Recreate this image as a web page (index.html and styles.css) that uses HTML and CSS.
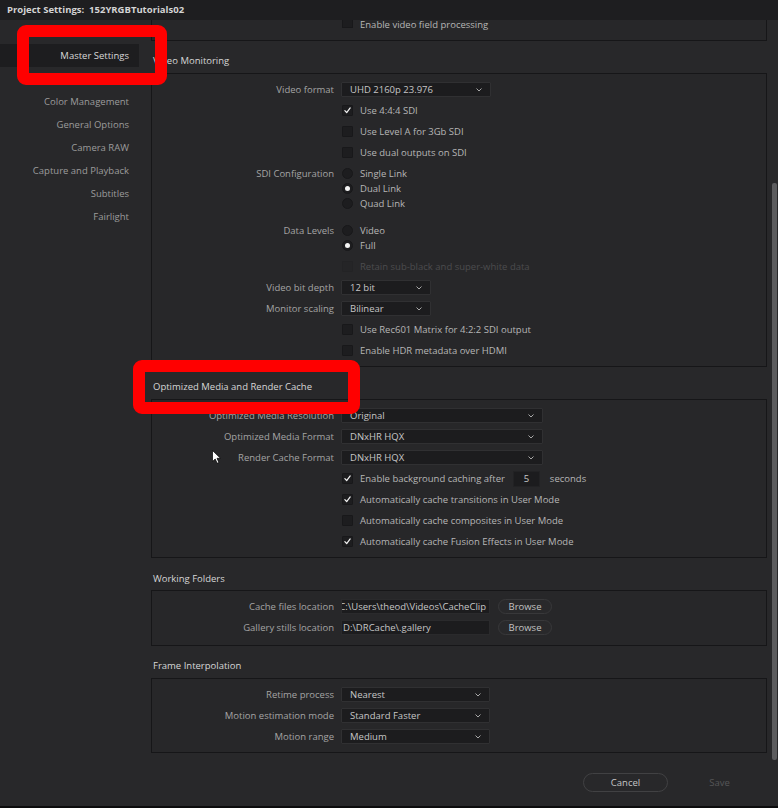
FILE: index.html
```html
<!DOCTYPE html>
<html>
<head>
<meta charset="utf-8">
<link rel="stylesheet" href="styles.css">
</head>
<body>
<div class="window">
  <div class="titlebar">Project Settings:&nbsp; 152YRGBTutorials02</div>
  <div class="main">
    <nav class="sidebar">
      <div class="nav-item active">Master Settings</div>
      <div class="nav-item gap">Color Management</div>
      <div class="nav-item">General Options</div>
      <div class="nav-item">Camera RAW</div>
      <div class="nav-item">Capture and Playback</div>
      <div class="nav-item">Subtitles</div>
      <div class="nav-item">Fairlight</div>
    </nav>
    <div class="content">
      <div class="panel partial">
        <div class="row cutrow"><span class="lbl"></span><span class="cb cut"></span><span class="cbl tight">Enable video field processing</span></div>
      </div>

      <div class="section-title">Video Monitoring</div>
      <div class="panel">
        <div class="row"><span class="lbl">Video format</span><span class="dd w150"><span class="ddv">UHD 2160p 23.976</span><svg class="chev" viewBox="0 0 6 4"><path d="M0.5 0.5 L3 3 L5.5 0.5"/></svg></span></div>
        <div class="row"><span class="lbl"></span><span class="cb on"><svg viewBox="0 0 11 11"><path d="M2.3 5.6 L4.5 8 L8.8 2.4"/></svg></span><span class="cbl">Use 4:4:4 SDI</span></div>
        <div class="row"><span class="lbl"></span><span class="cb"></span><span class="cbl">Use Level A for 3Gb SDI</span></div>
        <div class="row"><span class="lbl"></span><span class="cb"></span><span class="cbl">Use dual outputs on SDI</span></div>
        <div class="radio-group">
          <div class="rrow"><span class="lbl">SDI Configuration</span><span class="rb"></span><span class="cbl">Single Link</span></div>
          <div class="rrow"><span class="lbl"></span><span class="rb on"></span><span class="cbl">Dual Link</span></div>
          <div class="rrow"><span class="lbl"></span><span class="rb"></span><span class="cbl">Quad Link</span></div>
        </div>
        <div class="radio-group second">
          <div class="rrow"><span class="lbl">Data Levels</span><span class="rb"></span><span class="cbl">Video</span></div>
          <div class="rrow"><span class="lbl"></span><span class="rb on"></span><span class="cbl">Full</span></div>
        </div>
        <div class="row"><span class="lbl"></span><span class="cb off"></span><span class="cbl disabled">Retain sub-black and super-white data</span></div>
        <div class="row"><span class="lbl">Video bit depth</span><span class="dd w90"><span class="ddv">12 bit</span><svg class="chev" viewBox="0 0 6 4"><path d="M0.5 0.5 L3 3 L5.5 0.5"/></svg></span></div>
        <div class="row"><span class="lbl">Monitor scaling</span><span class="dd w90"><span class="ddv">Bilinear</span><svg class="chev" viewBox="0 0 6 4"><path d="M0.5 0.5 L3 3 L5.5 0.5"/></svg></span></div>
        <div class="row"><span class="lbl"></span><span class="cb"></span><span class="cbl">Use Rec601 Matrix for 4:2:2 SDI output</span></div>
        <div class="row"><span class="lbl"></span><span class="cb"></span><span class="cbl">Enable HDR metadata over HDMI</span></div>
      </div>

      <div class="section-title">Optimized Media and Render Cache</div>
      <div class="panel">
        <div class="row"><span class="lbl">Optimized Media Resolution</span><span class="dd w202"><span class="ddv">Original</span><svg class="chev" viewBox="0 0 6 4"><path d="M0.5 0.5 L3 3 L5.5 0.5"/></svg></span></div>
        <div class="row"><span class="lbl">Optimized Media Format</span><span class="dd w202"><span class="ddv">DNxHR HQX</span><svg class="chev" viewBox="0 0 6 4"><path d="M0.5 0.5 L3 3 L5.5 0.5"/></svg></span></div>
        <div class="row"><span class="lbl">Render Cache Format</span><span class="dd w202"><span class="ddv">DNxHR HQX</span><svg class="chev" viewBox="0 0 6 4"><path d="M0.5 0.5 L3 3 L5.5 0.5"/></svg></span></div>
        <div class="row"><span class="lbl"></span><span class="cb on"><svg viewBox="0 0 11 11"><path d="M2.3 5.6 L4.5 8 L8.8 2.4"/></svg></span><span class="cbl">Enable background caching after</span><span class="num">5</span><span class="cbl unit">seconds</span></div>
        <div class="row"><span class="lbl"></span><span class="cb on"><svg viewBox="0 0 11 11"><path d="M2.3 5.6 L4.5 8 L8.8 2.4"/></svg></span><span class="cbl">Automatically cache transitions in User Mode</span></div>
        <div class="row"><span class="lbl"></span><span class="cb"></span><span class="cbl">Automatically cache composites in User Mode</span></div>
        <div class="row"><span class="lbl"></span><span class="cb on"><svg viewBox="0 0 11 11"><path d="M2.3 5.6 L4.5 8 L8.8 2.4"/></svg></span><span class="cbl">Automatically cache Fusion Effects in User Mode</span></div>
      </div>

      <div class="section-title t3">Working Folders</div>
      <div class="panel pad-b">
        <div class="row"><span class="lbl">Cache files location</span><span class="path"><span>C:\Users\theod\Videos\CacheClip</span></span><span class="browse">Browse</span></div>
        <div class="row"><span class="lbl">Gallery stills location</span><span class="path left"><span>D:\DRCache\.gallery</span></span><span class="browse">Browse</span></div>
      </div>

      <div class="section-title t4">Frame Interpolation</div>
      <div class="panel">
        <div class="row"><span class="lbl">Retime process</span><span class="dd w149"><span class="ddv">Nearest</span><svg class="chev" viewBox="0 0 6 4"><path d="M0.5 0.5 L3 3 L5.5 0.5"/></svg></span></div>
        <div class="row"><span class="lbl">Motion estimation mode</span><span class="dd w149"><span class="ddv">Standard Faster</span><svg class="chev" viewBox="0 0 6 4"><path d="M0.5 0.5 L3 3 L5.5 0.5"/></svg></span></div>
        <div class="row"><span class="lbl">Motion range</span><span class="dd w149"><span class="ddv">Medium</span><svg class="chev" viewBox="0 0 6 4"><path d="M0.5 0.5 L3 3 L5.5 0.5"/></svg></span></div>
      </div>
    </div>
    <div class="scrollbar"><div class="thumb"></div></div>
  </div>
  <div class="footer">
    <button class="btn cancel">Cancel</button>
    <button class="btn save">Save</button>
  </div>

  <div class="highlight hl1"></div>
  <div class="highlight hl2"></div>
  <svg class="cursor" viewBox="0 0 9 14"><path d="M0.5 0.5 L0.5 11.5 L3.2 9 L5.2 13.3 L6.9 12.5 L5 8.3 L8.5 8.3 Z"/></svg>
</div>
</body>
</html>
```

FILE: styles.css
```css
* { box-sizing: border-box; }
html, body { margin: 0; padding: 0; background: #28282a; }
body {
  font-family: "Open Sans", "Noto Sans", "Liberation Sans", sans-serif;
  font-size: 9.5px;
  color: #a8a8a8;
}
.window {
  position: relative;
  width: 778px;
  height: 808px;
  overflow: hidden;
  background: #28282a;
  border-bottom: 2px solid #0c0c0d;
}
.titlebar {
  height: 20px;
  line-height: 20px;
  padding-left: 7px;
  background: #1e1e20;
  color: #d4d4d4;
  font-weight: 700;
  font-size: 9.5px;
}
.main {
  display: flex;
  height: 742px;
}
.sidebar {
  width: 151px;
  flex-shrink: 0;
  padding-top: 24px;
}
.nav-item {
  width: 139px;
  height: 23px;
  line-height: 23px;
  padding-right: 10px;
  text-align: right;
  color: #9c9c9c;
}
.nav-item.active {
  background: #1d1d1f;
  color: #d8d8d8;
}
.nav-item.gap { margin-top: 23px; }

.content {
  width: 616px;
  flex-shrink: 0;
  display: flex;
  flex-direction: column;
}
.panel {
  border: 1px solid #161618;
  background: #272729;
  padding: 5px 0 5px;
}
.panel.pad-b { padding-bottom: 7px; }
.panel.partial {
  height: 21px;
  border-top: 0;
  padding: 0;
}
.row.cutrow {
  height: 9px;
  align-items: flex-start;
}
.cb.cut {
  height: 8px;
  border-top: 0;
  border-radius: 0 0 1px 1px;
}
.cbl.tight { line-height: 9px; }
.section-title {
  height: 32px;
  padding-top: 13px;
  line-height: 14px;
  padding-left: 2px;
  color: #d6d6d6;
}
.section-title.t3 { height: 32px; padding-top: 14px; }
.section-title.t4 { height: 32px; padding-top: 13px; }

.row {
  display: flex;
  align-items: center;
  height: 21px;
}
.rrow {
  display: flex;
  align-items: center;
  height: 15px;
}
.radio-group { padding: 3px 0; }
.radio-group.second { padding-top: 9px; }
.lbl {
  width: 182px;
  flex-shrink: 0;
  text-align: right;
  margin-right: 8px;
  color: #a4a4a4;
  white-space: nowrap;
}
.cb, .rb {
  width: 11px;
  height: 11px;
  flex-shrink: 0;
  background: #1d1d1f;
  border: 1px solid #18181a;
  border-radius: 1px;
  display: flex;
  align-items: center;
  justify-content: center;
}
.cb svg { width: 11px; height: 11px; }
.cb svg path { fill: none; stroke: #f2f2f2; stroke-width: 1.5; stroke-linecap: round; stroke-linejoin: round; }
.cb.off { background: #252527; border-color: #232325; }
.rb { border-radius: 50%; }
.rb.on::after {
  content: "";
  width: 5px;
  height: 5px;
  border-radius: 50%;
  background: #f4f4f4;
}
.cbl {
  margin-left: 7px;
  color: #b6b6b6;
  white-space: nowrap;
}
.cbl.disabled { color: #4c4c4e; }
.cbl.unit { margin-left: 10px; }
.num {
  width: 27px;
  height: 16px;
  margin-left: 8px;
  background: #1c1c1e;
  border: 1px solid #222224;
  color: #c8c8c8;
  display: flex;
  align-items: center;
  justify-content: center;
}
.dd {
  height: 15px;
  margin-left: -1px;
  background: #1c1c1e;
  border: 1px solid #303032;
  border-radius: 1px;
  display: flex;
  align-items: center;
  justify-content: space-between;
  padding: 0 8px 0 8px;
  color: #c6c6c6;
}
.w150 { width: 150px; }
.w149 { width: 149px; }
.w90 { width: 90px; }
.w202 { width: 202px; }
.chev { width: 6px; height: 4px; }
.chev path { fill: none; stroke: #a8a8a8; stroke-width: 1; }
.path {
  width: 149px;
  height: 15px;
  margin-left: -1px;
  background: #1c1c1e;
  border: 1px solid #2a2a2c;
  overflow: hidden;
  display: flex;
  align-items: center;
  justify-content: flex-end;
  padding: 0 3px 0 1px;
  color: #c6c6c6;
  white-space: nowrap;
}
.path.left { justify-content: flex-start; padding-left: 1px; }
.path span { flex-shrink: 0; }
.browse {
  width: 54px;
  height: 15px;
  margin-left: 8px;
  border: 1px solid #38383a;
  border-radius: 8px;
  background: #29292b;
  color: #c2c2c2;
  display: flex;
  align-items: center;
  justify-content: center;
}

.scrollbar {
  width: 5px;
  margin-left: 5px;
  padding-top: 163px;
}
.thumb {
  height: 577px;
  background: #5c5c5e;
  border-radius: 2px;
}

.footer {
  height: 44px;
  display: flex;
  justify-content: flex-end;
  align-items: flex-start;
  padding: 11px 16px 0 0;
  gap: 9px;
}
.btn {
  width: 85px;
  height: 19px;
  border-radius: 10px;
  background: transparent;
  font-family: inherit;
  font-size: 9.5px;
  padding: 0;
  border: 1px solid #414143;
  color: #c6c6c6;
}
.btn.save { border-color: transparent; color: #565658; }

.highlight {
  position: absolute;
  border: 12px solid #ff0000;
  border-radius: 9px;
}
.hl1 { left: 17px; top: 25px; width: 150px; height: 60px; }
.hl2 { left: 133px; top: 360px; width: 227px; height: 54px; }
.cursor {
  position: absolute;
  left: 212px;
  top: 450px;
  width: 9px;
  height: 14px;
}
.cursor path { fill: #ffffff; stroke: #000000; stroke-width: 0.7; }
```
